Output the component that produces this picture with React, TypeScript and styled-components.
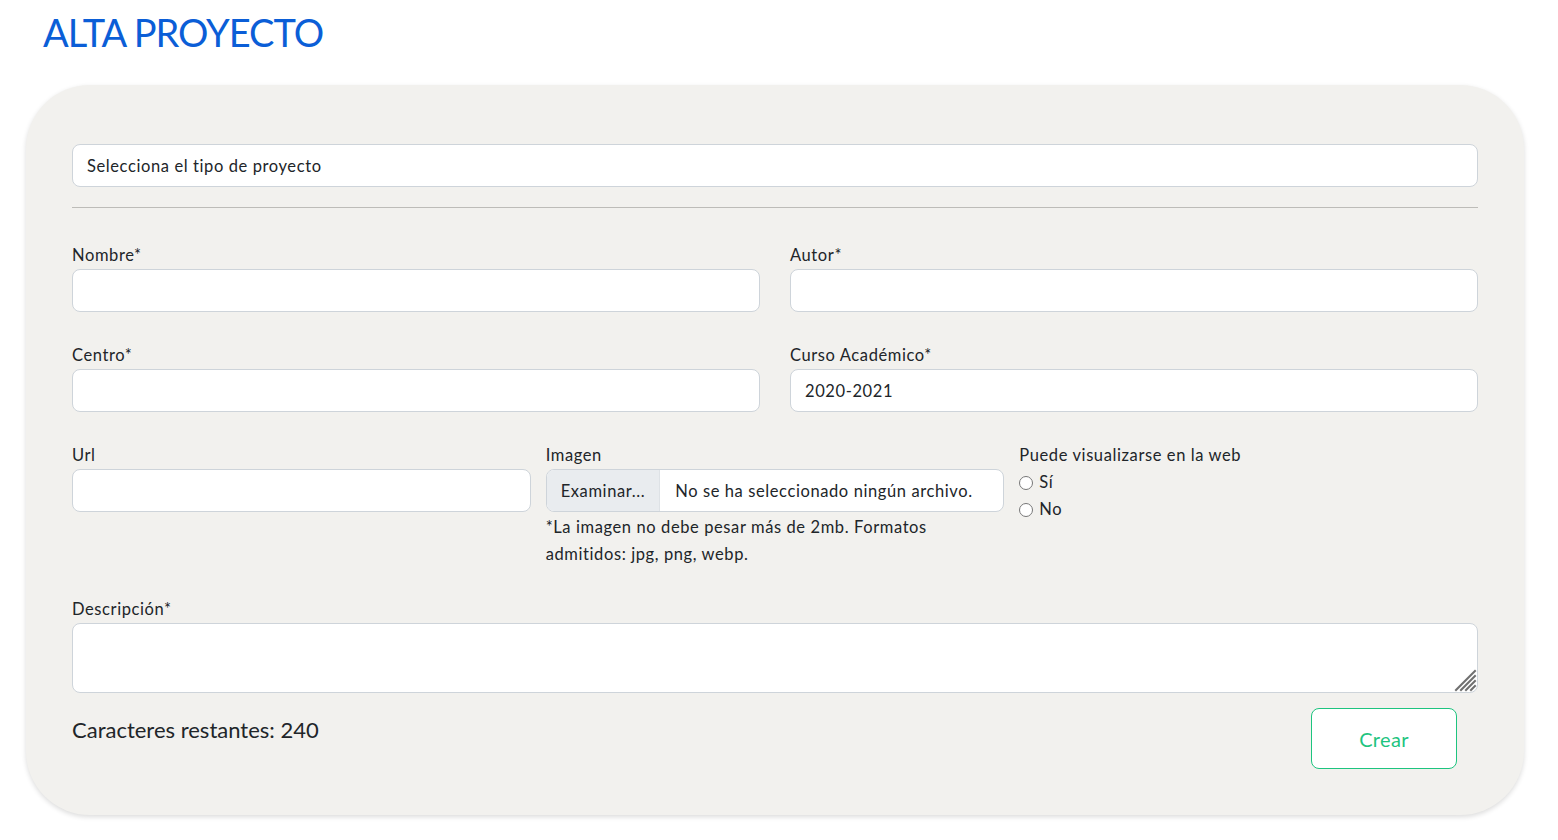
import React from "react";
import styled, { createGlobalStyle } from "styled-components";

const Global = createGlobalStyle`
  html, body { margin: 0; padding: 0; background: #ffffff; }
  body { font-family: "Lato", "Noto Sans", sans-serif; color: #212529; letter-spacing: 0.6px; }
  * { box-sizing: border-box; }
`;

const Page = styled.div`
  padding: 0 34px 24px 26px;
`;

const Title = styled.h1`
  margin: 0;
  padding: 9px 0 0 17px;
  height: 85px;
  font-size: 38px;
  line-height: 46px;
  font-weight: 400;
  color: #0b5ed7;
  letter-spacing: -1px;
`;

const Card = styled.form`
  background: #f2f1ee;
  border-radius: 64px;
  box-shadow: 0 2px 5px rgba(0, 0, 0, 0.14);
  padding: 59px 46px 46px;
`;

const SelectBox = styled.select`
  display: block;
  width: 100%;
  height: 43px;
  appearance: none;
  -webkit-appearance: none;
  background: #ffffff;
  border: 1px solid #ced4da;
  border-radius: 8px;
  padding: 0 14px;
  font-family: inherit;
  font-size: 16.5px;
  letter-spacing: inherit;
  color: #212529;
  outline: none;
`;

const Divider = styled.hr`
  margin: 20px 0 34px;
  border: 0;
  border-top: 1px solid #bdbcb8;
`;

const Row = styled.div<{ $cols: number; $gap: number; $after?: number }>`
  display: grid;
  grid-template-columns: repeat(${(p) => p.$cols}, 1fr);
  column-gap: ${(p) => p.$gap}px;
  margin-bottom: ${(p) => p.$after ?? 30}px;
`;

const Field = styled.div`
  display: flex;
  flex-direction: column;
`;

const Label = styled.label`
  display: block;
  font-size: 16.5px;
  line-height: 26px;
  margin-bottom: 1px;
`;

const TextInput = styled.input`
  display: block;
  width: 100%;
  height: 43px;
  background: #ffffff;
  border: 1px solid #ced4da;
  border-radius: 8px;
  padding: 0 14px;
  font-family: inherit;
  font-size: 16.5px;
  letter-spacing: inherit;
  color: #212529;
  outline: none;
`;

const FileBox = styled.div`
  display: flex;
  height: 43px;
  background: #ffffff;
  border: 1px solid #ced4da;
  border-radius: 8px;
  overflow: hidden;
  font-size: 16.5px;
`;

const FileButton = styled.span`
  display: flex;
  align-items: center;
  padding: 0 14px;
  background: #e9ecef;
  border-right: 1px solid #dee2e6;
`;

const FileName = styled.span`
  display: flex;
  align-items: center;
  padding: 0 15px;
`;

const Help = styled.p`
  margin: 0;
  padding-top: 2px;
  font-size: 16.5px;
  line-height: 27px;
`;

const RadioLine = styled.label`
  display: flex;
  align-items: center;
  gap: 6px;
  font-size: 16.5px;
  line-height: 27px;
`;

const Radio = styled.input`
  margin: 0;
  width: 14px;
  height: 14px;
`;

const AreaWrap = styled.div`
  position: relative;
`;

const TextArea = styled.textarea`
  display: block;
  width: 100%;
  height: 70px;
  background: #ffffff;
  border: 1px solid #ced4da;
  border-radius: 8px;
  padding: 8px 14px;
  font-family: inherit;
  font-size: 16.5px;
  outline: none;
  resize: none;
`;

const Grip = styled.svg`
  position: absolute;
  right: 1px;
  bottom: 1px;
  pointer-events: none;
`;

const Footer = styled.div`
  display: flex;
  justify-content: space-between;
  align-items: flex-start;
  margin-top: 15px;
  padding-right: 21px;
`;

const Counter = styled.span`
  font-size: 22px;
  line-height: 33px;
  padding-top: 5px;
  letter-spacing: 0;
`;

const CreateButton = styled.button`
  width: 146px;
  height: 61px;
  background: #ffffff;
  border: 1px solid #1ec47f;
  border-radius: 8px;
  color: #1ec47f;
  font-family: inherit;
  font-size: 20px;
  letter-spacing: 0.3px;
`;

export default function App() {
  return (
    <Page>
      <Global />
      <Title>ALTA PROYECTO</Title>
      <Card onSubmit={(e) => e.preventDefault()}>
        <SelectBox defaultValue="">
          <option value="">Selecciona el tipo de proyecto</option>
        </SelectBox>
        <Divider />
        <Row $cols={2} $gap={30}>
          <Field>
            <Label>Nombre*</Label>
            <TextInput />
          </Field>
          <Field>
            <Label>Autor*</Label>
            <TextInput />
          </Field>
        </Row>
        <Row $cols={2} $gap={30}>
          <Field>
            <Label>Centro*</Label>
            <TextInput />
          </Field>
          <Field>
            <Label>Curso Académico*</Label>
            <TextInput defaultValue="2020-2021" />
          </Field>
        </Row>
        <Row $cols={3} $gap={15} $after={28}>
          <Field>
            <Label>Url</Label>
            <TextInput />
          </Field>
          <Field>
            <Label>Imagen</Label>
            <FileBox>
              <FileButton>Examinar...</FileButton>
              <FileName>No se ha seleccionado ningún archivo.</FileName>
            </FileBox>
            <Help>*La imagen no debe pesar más de 2mb. Formatos admitidos: jpg, png, webp.</Help>
          </Field>
          <Field>
            <Label>Puede visualizarse en la web</Label>
            <RadioLine>
              <Radio type="radio" name="web" />
              Sí
            </RadioLine>
            <RadioLine>
              <Radio type="radio" name="web" />
              No
            </RadioLine>
          </Field>
        </Row>
        <Field>
          <Label>Descripción*</Label>
          <AreaWrap>
            <TextArea />
            <Grip width="24" height="24" viewBox="0 0 24 24">
              <g stroke="#6f6f6f" strokeWidth="2" strokeLinecap="square">
                <line x1="3" y1="22" x2="22" y2="3" />
                <line x1="8" y1="22" x2="22" y2="8" />
                <line x1="13" y1="22" x2="22" y2="13" />
                <line x1="18" y1="22" x2="22" y2="18" />
              </g>
            </Grip>
          </AreaWrap>
        </Field>
        <Footer>
          <Counter>Caracteres restantes: 240</Counter>
          <CreateButton type="submit">Crear</CreateButton>
        </Footer>
      </Card>
    </Page>
  );
}
